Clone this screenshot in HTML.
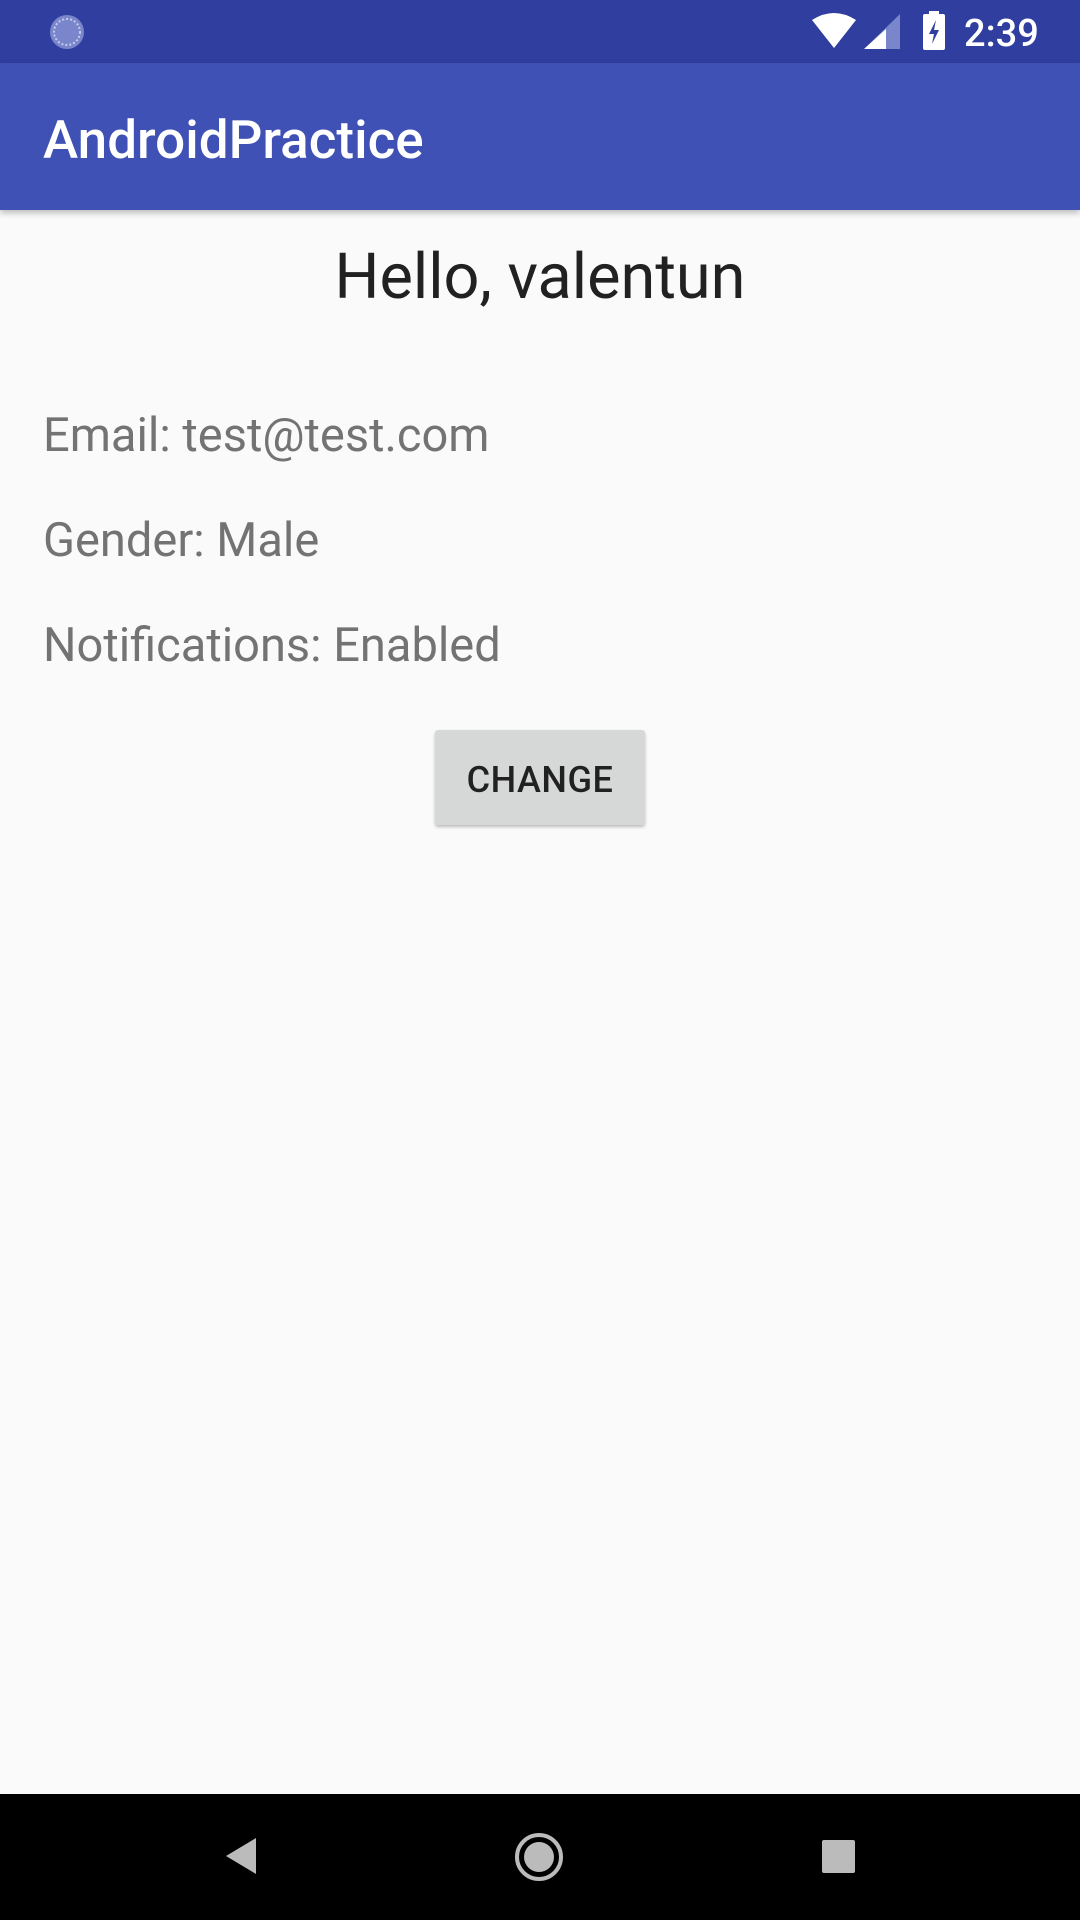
<!DOCTYPE html>
<html><head><meta charset="utf-8"><style>
*{margin:0;padding:0;box-sizing:border-box}
body{width:1080px;height:1920px;background:#fafafa;font-family:"Roboto","Liberation Sans",sans-serif;position:relative;overflow:hidden}
.sb{position:absolute;left:0;top:0;width:1080px;height:63px;background:#303f9f}
.ab{position:absolute;left:0;top:63px;width:1080px;height:147px;background:#3f51b5;box-shadow:0 3px 6px rgba(0,0,0,.25)}
.t{position:absolute;white-space:nowrap;line-height:1}
.nav{position:absolute;left:0;top:1794px;width:1080px;height:126px;background:#000}
.btn{position:absolute;left:435px;top:730px;width:210px;height:95px;background:#d6d7d7;border-radius:3px;box-shadow:0 2px 3px rgba(0,0,0,.25)}
</style></head><body>
<div class="sb"></div>
<svg style="position:absolute;left:48px;top:13px" width="38" height="38"><circle cx="19" cy="19" r="17" fill="#7986cb"/><circle cx="19" cy="19" r="13" fill="none" stroke="#c5cae9" stroke-width="2" stroke-dasharray="2 2"/></svg>
<svg style="position:absolute;left:810px;top:12px" width="50" height="38"><path d="M2 8 Q24 -6 46 8 L24 36 Z" fill="#fff"/></svg>
<svg style="position:absolute;left:864px;top:14px" width="38" height="36"><path d="M36 0 L36 35 L0 35 Z" fill="#7986cb"/><path d="M22 15 L22 35 L0 35 Z" fill="#fff"/></svg>
<svg style="position:absolute;left:923px;top:11px" width="22" height="40"><rect x="6" y="0" width="10" height="4" fill="#fff"/><rect x="0" y="3" width="22" height="36" rx="2" fill="#fff"/><path d="M13 9 L6 23 L11 23 L9 33 L16 19 L11 19 Z" fill="#303f9f"/></svg>
<div class="t" style="left:964px;top:15px;font-size:38px;color:#fff;font-weight:500">2:39</div>
<div class="ab"></div>
<div class="t" style="left:43px;top:114px;font-size:53px;color:#fff;font-weight:500">AndroidPractice</div>
<div class="t" style="left:0;width:1080px;text-align:center;top:246px;font-size:63px;color:#212121">Hello, valentun</div>
<div class="t" style="left:43px;top:412px;font-size:47px;color:#737373">Email: test@test.com</div>
<div class="t" style="left:43px;top:517px;font-size:47px;color:#737373">Gender: Male</div>
<div class="t" style="left:43px;top:622px;font-size:47px;color:#737373">Notifications: Enabled</div>
<div class="btn"></div>
<div class="t" style="left:435px;width:210px;text-align:center;top:762px;font-size:36px;color:#212121;font-weight:500;letter-spacing:0.5px">CHANGE</div>
<div class="nav"></div>
<svg style="position:absolute;left:224px;top:1836px" width="34" height="40"><path d="M32 2 L32 38 L2 20 Z" fill="#bbb"/></svg>
<svg style="position:absolute;left:513px;top:1831px" width="52" height="52"><circle cx="26" cy="26" r="22" fill="none" stroke="#bbb" stroke-width="4"/><circle cx="26" cy="26" r="15" fill="#bbb"/></svg>
<div style="position:absolute;left:822px;top:1840px;width:33px;height:33px;background:#bbb;border-radius:2px"></div>
</body></html>
